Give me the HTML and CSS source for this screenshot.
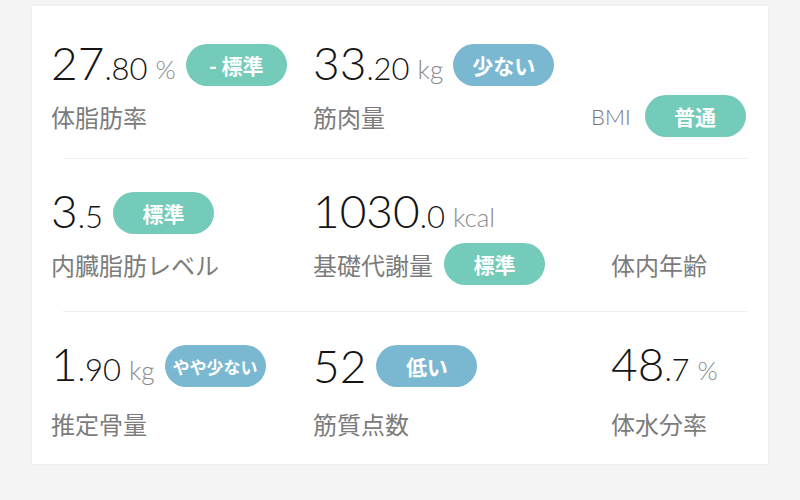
FILE: index.html
```html
<!DOCTYPE html>
<html lang="ja">
  <head>
    <meta charset="UTF-8" />
    <meta name="viewport" content="width=device-width, initial-scale=1.0" />
    <title>体組成</title>
    <link rel="stylesheet" href="styles.css">
  </head>
  <body>
    <div class="card">
      <div class="row first">
        <div class="cell">
          <div class="value-line">
            <span class="num">27<small>.80</small></span><span class="unit">%</span>
            <span class="badge teal">- 標準</span>
          </div>
          <div class="label-line">体脂肪率</div>
        </div>
        <div class="cell">
          <div class="value-line">
            <span class="num">33<small>.20</small></span><span class="unit">kg</span>
            <span class="badge blue">少ない</span>
          </div>
          <div class="label-line">筋肉量</div>
        </div>
        <div class="cell bmi">
          <div class="value-line"></div>
          <div class="label-line">
            <span class="latin">BMI</span>
            <span class="badge teal">普通</span>
          </div>
        </div>
      </div>

      <div class="divider"></div>

      <div class="row second">
        <div class="cell">
          <div class="value-line">
            <span class="num">3<small>.5</small></span>
            <span class="badge teal">標準</span>
          </div>
          <div class="label-line">内臓脂肪レベル</div>
        </div>
        <div class="cell">
          <div class="value-line">
            <span class="num">1030<small>.0</small></span><span class="unit">kcal</span>
          </div>
          <div class="label-line">
            基礎代謝量
            <span class="badge teal">標準</span>
          </div>
        </div>
        <div class="cell">
          <div class="value-line"></div>
          <div class="label-line">体内年齢</div>
        </div>
      </div>

      <div class="divider"></div>

      <div class="row third">
        <div class="cell">
          <div class="value-line">
            <span class="num">1<small>.90</small></span><span class="unit">kg</span>
            <span class="badge blue small-text">やや少ない</span>
          </div>
          <div class="label-line">推定骨量</div>
        </div>
        <div class="cell">
          <div class="value-line">
            <span class="num">52</span>
            <span class="badge blue">低い</span>
          </div>
          <div class="label-line">筋質点数</div>
        </div>
        <div class="cell">
          <div class="value-line">
            <span class="num">48<small>.7</small></span><span class="unit">%</span>
          </div>
          <div class="label-line">体水分率</div>
        </div>
      </div>
    </div>
  </body>
</html>
```

FILE: styles.css
```css
body {
  margin: 0;
  padding: 5px 31px 0;
  background: #f4f4f4;
  font-family: "Noto Sans CJK JP", "Noto Sans", sans-serif;
}
.card {
  width: 738px;
  height: 460px;
  background: white;
  border: 1px solid #efefef;
  box-sizing: border-box;
}
.row {
  display: grid;
  grid-template-columns: 262px 278px 1fr;
  padding: 31px 0 20px 19px;
}
.row.first {
  padding: 36px 0 21px 19px;
}
.row.second {
  padding-bottom: 26px;
}
.cell {
  display: flex;
  flex-direction: column;
  gap: 7px;
}
.third .cell {
  gap: 13px;
}
.row .cell:nth-child(3):not(.bmi) {
  padding-left: 20px;
}
.value-line {
  height: 46px;
  display: flex;
  align-items: center;
  white-space: nowrap;
}
.num {
  font-family: "Lato", sans-serif;
  font-weight: 300;
  font-size: 46px;
  color: #141414;
  line-height: 46px;
}
.num small {
  font-size: 31px;
}
.unit {
  font-family: "Lato", sans-serif;
  font-weight: 300;
  font-size: 26px;
  color: #8a8a8a;
  margin-left: 8px;
  margin-top: 8px;
}
.label-line {
  height: 42px;
  display: flex;
  align-items: center;
  gap: 11px;
  font-size: 24px;
  color: #7c7c7c;
  white-space: nowrap;
}
.latin {
  font-family: "Lato", sans-serif;
  font-weight: 300;
  font-size: 22px;
  color: #777;
}
.bmi .label-line {
  justify-content: flex-end;
  padding-right: 23px;
  gap: 14px;
}
.badge {
  display: inline-flex;
  align-items: center;
  justify-content: center;
  flex-shrink: 0;
  width: 101px;
  height: 42px;
  border-radius: 21px;
  margin-left: 10px;
  color: white;
  font-weight: bold;
  font-size: 21px;
  font-family: "Noto Sans CJK JP", sans-serif;
}
.label-line .badge {
  margin-left: 0;
}
.badge.teal {
  background: #75cbb9;
}
.badge.blue {
  background: #7ab8d2;
}
.badge.small-text {
  font-size: 17px;
}
.divider {
  height: 1px;
  background: #eeeeee;
  margin: 0 20px 0 31px;
}
```
